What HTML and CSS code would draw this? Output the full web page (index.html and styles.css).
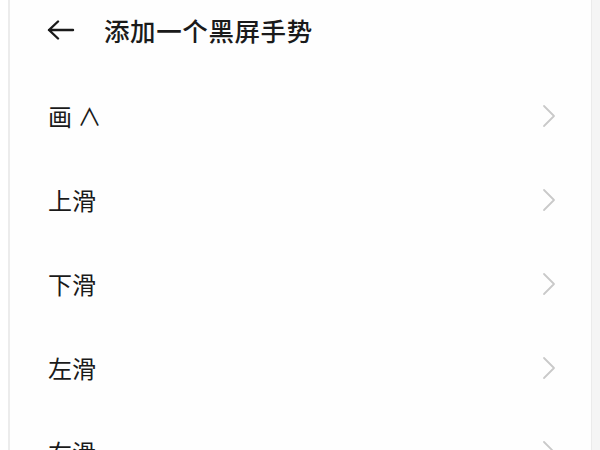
FILE: index.html
```html
<!DOCTYPE html>
<html lang="zh">
<head>
<meta charset="utf-8">
<link rel="stylesheet" href="styles.css">
</head>
<body>
<div class="screen">
  <div class="page">
    <header class="header">
      <svg class="back" width="28" height="20" viewBox="0 0 28 20">
        <path d="M2 10 H26 M11 1.5 L2 10 L11 18.5" fill="none" stroke="#1a1a1a" stroke-width="2.4" stroke-linecap="round" stroke-linejoin="round"/>
      </svg>
      <h1 class="title">添加一个黑屏手势</h1>
    </header>
    <ul class="list">
      <li class="row"><span class="label">画 ∧</span><svg class="chev" width="14" height="24" viewBox="0 0 14 24"><path d="M2 2 L12 12 L2 22" fill="none" stroke="#c9c9c9" stroke-width="1.8" stroke-linecap="round" stroke-linejoin="round"/></svg></li>
      <li class="row"><span class="label">上滑</span><svg class="chev" width="14" height="24" viewBox="0 0 14 24"><path d="M2 2 L12 12 L2 22" fill="none" stroke="#c9c9c9" stroke-width="1.8" stroke-linecap="round" stroke-linejoin="round"/></svg></li>
      <li class="row"><span class="label">下滑</span><svg class="chev" width="14" height="24" viewBox="0 0 14 24"><path d="M2 2 L12 12 L2 22" fill="none" stroke="#c9c9c9" stroke-width="1.8" stroke-linecap="round" stroke-linejoin="round"/></svg></li>
      <li class="row"><span class="label">左滑</span><svg class="chev" width="14" height="24" viewBox="0 0 14 24"><path d="M2 2 L12 12 L2 22" fill="none" stroke="#c9c9c9" stroke-width="1.8" stroke-linecap="round" stroke-linejoin="round"/></svg></li>
      <li class="row"><span class="label">右滑</span><svg class="chev" width="14" height="24" viewBox="0 0 14 24"><path d="M2 2 L12 12 L2 22" fill="none" stroke="#c9c9c9" stroke-width="1.8" stroke-linecap="round" stroke-linejoin="round"/></svg></li>
    </ul>
  </div>
  <div class="gutter"></div>
</div>
</body>
</html>
```
FILE: styles.css
```css
html, body {
  margin: 0;
  padding: 0;
  background: #ffffff;
  overflow: hidden;
}
body {
  font-family: "Noto Sans CJK SC", "Noto Sans", sans-serif;
  color: #1a1a1a;
}
.screen {
  display: flex;
  height: 450px;
  padding-left: 8px;
}
.page {
  flex: 1;
  border-left: 2px solid #ececec;
  background: #fefefe;
  overflow: hidden;
}
.gutter {
  width: 8px;
  background: #f5f5f5;
  border-left: 1px solid #ebebeb;
}
.header {
  height: 60px;
  display: flex;
  align-items: center;
  padding-left: 37px;
}
.back {
  display: block;
}
.title {
  margin: 0 0 0 29px;
  font-size: 25.5px;
  font-weight: 500;
  line-height: 1;
  letter-spacing: 0.6px;
}
.list {
  list-style: none;
  margin: 0;
  padding: 14px 0 0 0;
}
.row {
  height: 84px;
  display: flex;
  align-items: center;
  justify-content: space-between;
  padding: 0 35px 0 38px;
}
.label {
  font-size: 24px;
  font-weight: 400;
  line-height: 1;
}
.chev {
  display: block;
}
```
